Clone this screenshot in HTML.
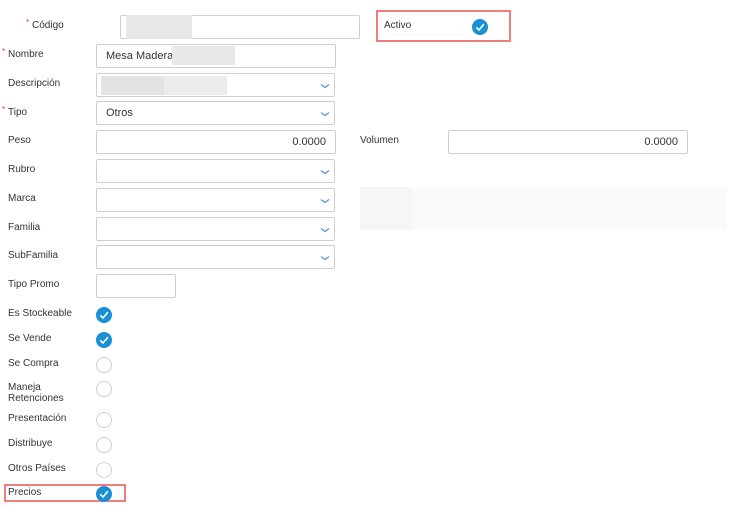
<!DOCTYPE html>
<html><head><meta charset="utf-8"><style>
*{margin:0;padding:0;box-sizing:border-box}
body{width:735px;height:502px;background:#fff;font-family:"Liberation Sans",sans-serif;position:relative;overflow:hidden;color:#333}
.l{position:absolute;font-size:10px;line-height:11px;color:#333;margin-top:1px}
.s{color:#e0303d;font-size:8px;position:absolute;top:-3px;left:-6px}
.i{position:absolute;border:1px solid #cfcfcf;border-radius:2px;background:#fff;font-size:11px;color:#333}
.v{position:absolute;right:9px;top:5px;font-size:11px}
.t{position:absolute;left:10px;top:5px;font-size:11px}
.ch{position:absolute;right:4px;top:9px;width:10px;height:6px}
.c{position:absolute;width:16px;height:16px;border-radius:50%;border:1px solid #d0d0d0;background:#fff}
.k{position:absolute;width:16px;height:16px;border-radius:50%;background:#1a8fd6}
.g{position:absolute;background:#e6e6e6}
.r{position:absolute;border:2px solid #f07c7c}
</style></head><body>
<svg width="0" height="0" style="position:absolute"><defs>
<symbol id="ck" viewBox="0 0 16 16"><path d="M4.2 8.3 L7 11 L11.9 5.2" fill="none" stroke="#fff" stroke-width="1.6"/></symbol>
<symbol id="cv" viewBox="0 0 10 6"><path d="M1 1.5 L5 4.5 L9 1.5" fill="none" stroke="#4a90d9" stroke-width="1.1"/></symbol>
</defs></svg>

<div class="l" style="left:32px;top:19px"><span class="s">*</span>Código</div>
<div class="i" style="left:120px;top:15px;width:240px;height:24px"><div class="g" style="left:5px;top:-1px;width:66px;height:24px;background:#e8e8e9"></div></div>
<div class="r" style="left:376px;top:10px;width:135px;height:32px"></div>
<div class="l" style="left:384px;top:19px">Activo</div>
<div class="k" style="left:472px;top:19px"><svg width="16" height="16"><use href="#ck"/></svg></div>

<div class="l" style="left:8px;top:48px"><span class="s">*</span>Nombre</div>
<div class="i" style="left:96px;top:44px;width:240px;height:24px"><div class="t" style="left:9px">Mesa Madera</div><div class="g" style="left:75px;top:1px;width:63px;height:19px;background:#e8e8e9"></div></div>

<div class="l" style="left:8px;top:77px">Descripción</div>
<div class="i" style="left:96px;top:73px;width:239px;height:24px"><div class="g" style="left:4px;top:2px;width:63px;height:19px;background:#e3e3e4"></div><div class="g" style="left:67px;top:2px;width:63px;height:19px;background:#ececed"></div><svg class="ch"><use href="#cv"/></svg></div>

<div class="l" style="left:8px;top:106px"><span class="s">*</span>Tipo</div>
<div class="i" style="left:96px;top:101px;width:239px;height:24px"><div class="t" style="left:9px">Otros</div><svg class="ch"><use href="#cv"/></svg></div>

<div class="l" style="left:8px;top:134px">Peso</div>
<div class="i" style="left:96px;top:130px;width:240px;height:24px"><div class="v">0.0000</div></div>
<div class="l" style="left:360px;top:134px">Volumen</div>
<div class="i" style="left:448px;top:130px;width:240px;height:24px"><div class="v">0.0000</div></div>

<div style="position:absolute;left:360px;top:187px;width:367px;height:43px;background:#fafafa"></div>
<div style="position:absolute;left:360px;top:187px;width:52px;height:43px;background:#f6f6f6"></div>

<div class="l" style="left:8px;top:163px">Rubro</div>
<div class="i" style="left:96px;top:159px;width:239px;height:24px"><svg class="ch"><use href="#cv"/></svg></div>
<div class="l" style="left:8px;top:192px">Marca</div>
<div class="i" style="left:96px;top:188px;width:239px;height:24px"><svg class="ch"><use href="#cv"/></svg></div>
<div class="l" style="left:8px;top:221px">Familia</div>
<div class="i" style="left:96px;top:217px;width:239px;height:24px"><svg class="ch"><use href="#cv"/></svg></div>
<div class="l" style="left:8px;top:249px">SubFamilia</div>
<div class="i" style="left:96px;top:245px;width:239px;height:24px"><svg class="ch"><use href="#cv"/></svg></div>
<div class="l" style="left:8px;top:278px">Tipo Promo</div>
<div class="i" style="left:96px;top:274px;width:80px;height:24px"></div>

<div class="l" style="left:8px;top:307px">Es Stockeable</div>
<div class="k" style="left:96px;top:307px"><svg width="16" height="16"><use href="#ck"/></svg></div>
<div class="l" style="left:8px;top:332px">Se Vende</div>
<div class="k" style="left:96px;top:332px"><svg width="16" height="16"><use href="#ck"/></svg></div>
<div class="l" style="left:8px;top:357px">Se Compra</div>
<div class="c" style="left:96px;top:357px"></div>
<div class="l" style="left:8px;top:381px">Maneja<br>Retenciones</div>
<div class="c" style="left:96px;top:381px"></div>
<div class="l" style="left:8px;top:412px">Presentación</div>
<div class="c" style="left:96px;top:412px"></div>
<div class="l" style="left:8px;top:437px">Distribuye</div>
<div class="c" style="left:96px;top:437px"></div>
<div class="l" style="left:8px;top:462px">Otros Países</div>
<div class="c" style="left:96px;top:462px"></div>
<div class="r" style="left:4px;top:484px;width:122px;height:18px"></div>
<div class="l" style="left:8px;top:486px">Precios</div>
<div class="k" style="left:96px;top:486px"><svg width="16" height="16"><use href="#ck"/></svg></div>
</body></html>
